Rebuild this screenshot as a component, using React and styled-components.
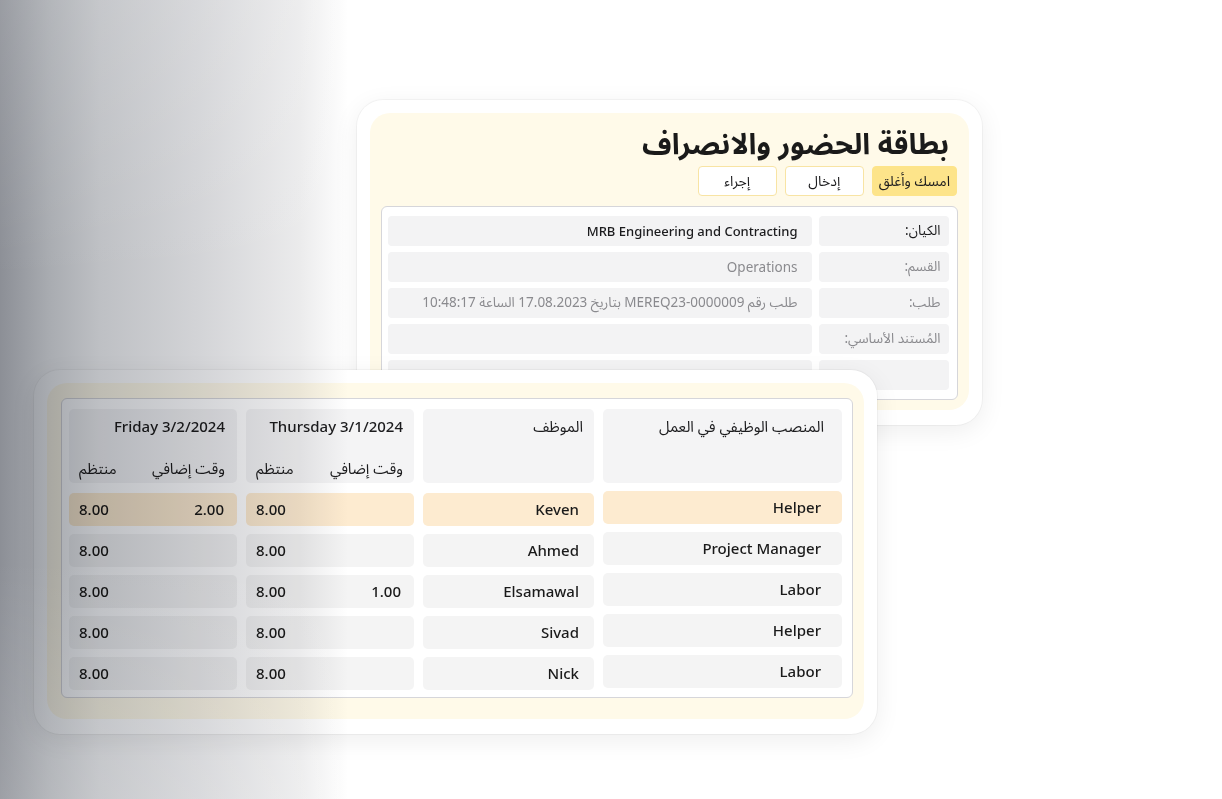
import React from "react";
import styled, { createGlobalStyle } from "styled-components";

const Global = createGlobalStyle`
  html, body { margin: 0; padding: 0; background: #ffffff; }
  body {
    font-family: "Noto Sans", "Noto Sans Arabic", "DejaVu Sans", sans-serif;
    color: #1c1c1e;
    -webkit-font-smoothing: antialiased;
  }
  * { box-sizing: border-box; }
`;

const Stage = styled.div`
  position: relative;
  width: 1222px;
  height: 799px;
  overflow: hidden;
  background: #ffffff;
`;

const Frame = styled.section`
  position: absolute;
  left: ${(p) => p.$left}px;
  top: ${(p) => p.$top}px;
  width: ${(p) => p.$width}px;
  height: ${(p) => p.$height}px;
  padding: 13px 13px 15px 13px;
  background: #ffffff;
  border-radius: 26px;
  box-shadow: 0 0 0 1px rgba(0, 0, 0, 0.035), 0 6px 26px rgba(0, 0, 0, 0.07);
  z-index: ${(p) => p.$z};
`;

const Panel = styled.div`
  height: 100%;
  background: #fffae9;
  border-radius: 20px;
  padding: ${(p) => p.$pad};
  display: flex;
  flex-direction: column;
`;

const Title = styled.h1`
  margin: 0 9px 0 0;
  font-size: 29px;
  line-height: 44px;
  font-weight: 700;
  color: #1a1a1a;
`;

const Toolbar = styled.div`
  display: flex;
  gap: 8px;
  margin-top: 1px;
  padding-right: 1px;
`;

const Button = styled.button`
  height: 30px;
  min-width: 79px;
  padding: 0 6px;
  border-radius: 4px;
  font-family: inherit;
  font-size: 14px;
  color: #1c1c1e;
  cursor: pointer;
  background: ${(p) => (p.$primary ? "#fde48a" : "#ffffff")};
  border: 1px solid ${(p) => (p.$primary ? "#fde48a" : "#f8e4a4")};
`;

const FormBox = styled.div`
  margin-top: 10px;
  height: 196px;
  overflow: hidden;
  background: #ffffff;
  border: 1.5px solid #d6d6da;
  border-radius: 6px;
  padding: 8.5px 8.5px 0 5.5px;
  display: grid;
  grid-template-columns: 130px 1fr;
  grid-auto-rows: 30px;
  column-gap: 7px;
  row-gap: 6px;
`;

const Cell = styled.div`
  background: #f3f3f4;
  border-radius: 4px;
  display: flex;
  align-items: center;
  padding: 0 ${(p) => p.$pr || 8}px 0 8px;
  font-size: ${(p) => (p.$bold ? 13 : 13.5)}px;
  color: ${(p) => (p.$muted ? "#8a8a8e" : "#1c1c1e")};
  font-weight: ${(p) => (p.$bold ? 500 : 400)};
  white-space: nowrap;
  overflow: hidden;
`;

const TableBox = styled.div`
  background: #ffffff;
  border: 1.5px solid #d6d6da;
  border-radius: 6px;
  padding: 9.5px 10px 7px 5.5px;
  display: grid;
  grid-template-columns: 239px 171px 168px 168px;
  grid-template-rows: 76px repeat(5, 33px);
  column-gap: 9px;
  row-gap: 8px;
`;

const HeadCell = styled.div`
  height: 74px;
  background: #f4f4f5;
  border-radius: 5px;
  padding: 7px ${(p) => p.$pr}px 5px 10px;
  display: flex;
  flex-direction: column;
  justify-content: space-between;
  font-size: 15px;
  line-height: 20px;
  color: #1c1c1e;
`;

const HeadTitle = styled.div`
  font-weight: ${(p) => (p.$latin ? 500 : 400)};
`;

const SubRow = styled.div`
  display: flex;
  justify-content: space-between;
`;

const DataCell = styled.div`
  background: ${(p) => (p.$hl ? "#fdebd0" : "#f4f4f4")};
  border-radius: 5px;
  padding: 0 ${(p) => p.$pr}px 0 10px;
  display: flex;
  align-items: center;
  justify-content: space-between;
  font-size: 15px;
  font-weight: 500;
  color: #1a1a1a;
  transform: translateY(${(p) => p.$shift || 0}px);
`;

const Shade = styled.div`
  position: absolute;
  inset: 0;
  pointer-events: none;
  z-index: 10;
  mix-blend-mode: multiply;
  background:
    linear-gradient(to bottom, rgba(255,255,255,0.12) 0%, rgba(255,255,255,0) 35%, rgba(255,255,255,0) 70%, rgba(255,255,255,0.15) 100%),
    linear-gradient(to right, #8c8f96 0px, #a9acb1 50px, #bec0c4 100px, #d3d4d7 200px, #ebebec 300px, #ffffff 348px);
`;

const formRows = [
  { label: "الكيان:", value: "MRB Engineering and Contracting", dark: true },
  { label: "القسم:", value: "Operations" },
  { label: "طلب:", value: "طلب رقم MEREQ23-0000009 بتاريخ 17.08.2023 الساعة 10:48:17" },
  { label: "المُستند الأساسي:", value: "" },
  { label: "", value: "" },
];

const people = [
  { pos: "Helper", name: "Keven", thu: ["", "8.00"], fri: ["2.00", "8.00"] },
  { pos: "Project Manager", name: "Ahmed", thu: ["", "8.00"], fri: ["", "8.00"] },
  { pos: "Labor", name: "Elsamawal", thu: ["1.00", "8.00"], fri: ["", "8.00"] },
  { pos: "Helper", name: "Sivad", thu: ["", "8.00"], fri: ["", "8.00"] },
  { pos: "Labor", name: "Nick", thu: ["", "8.00"], fri: ["", "8.00"] },
];

export default function App() {
  return (
    <Stage dir="rtl">
      <Global />
      <Frame $left={357} $top={100} $width={625} $height={325} $z={1}>
        <Panel $pad="8px 11px 10px 11px">
          <Title>بطاقة الحضور والانصراف</Title>
          <Toolbar>
            <Button $primary>امسك وأغلق</Button>
            <Button>إدخال</Button>
            <Button>إجراء</Button>
          </Toolbar>
          <FormBox>
            {formRows.map((r, i) => (
              <React.Fragment key={i}>
                <Cell $muted={!r.dark}>{r.label}</Cell>
                <Cell $muted={!r.dark} $bold={r.dark} $pr={14}>
                  {r.value}
                </Cell>
              </React.Fragment>
            ))}
          </FormBox>
        </Panel>
      </Frame>

      <Frame $left={34} $top={370} $width={843} $height={364} $z={2}>
        <Panel $pad="15px 11px 18px 14px">
          <TableBox>
            <HeadCell $pr={18}>
              <HeadTitle>المنصب الوظيفي في العمل</HeadTitle>
            </HeadCell>
            <HeadCell $pr={11}>
              <HeadTitle>الموظف</HeadTitle>
            </HeadCell>
            <HeadCell $pr={11}>
              <HeadTitle $latin>Thursday 3/1/2024</HeadTitle>
              <SubRow>
                <span>وقت إضافي</span>
                <span>منتظم</span>
              </SubRow>
            </HeadCell>
            <HeadCell $pr={12}>
              <HeadTitle $latin>Friday 3/2/2024</HeadTitle>
              <SubRow>
                <span>وقت إضافي</span>
                <span>منتظم</span>
              </SubRow>
            </HeadCell>
            {people.map((p, i) => (
              <React.Fragment key={i}>
                <DataCell $hl={i === 0} $pr={21} $shift={-2}>
                  <span>{p.pos}</span>
                </DataCell>
                <DataCell $hl={i === 0} $pr={15}>
                  <span>{p.name}</span>
                </DataCell>
                <DataCell $hl={i === 0} $pr={13}>
                  <span>{p.thu[0]}</span>
                  <span>{p.thu[1]}</span>
                </DataCell>
                <DataCell $hl={i === 0} $pr={13}>
                  <span>{p.fri[0]}</span>
                  <span>{p.fri[1]}</span>
                </DataCell>
              </React.Fragment>
            ))}
          </TableBox>
        </Panel>
      </Frame>
      <Shade />
    </Stage>
  );
}
